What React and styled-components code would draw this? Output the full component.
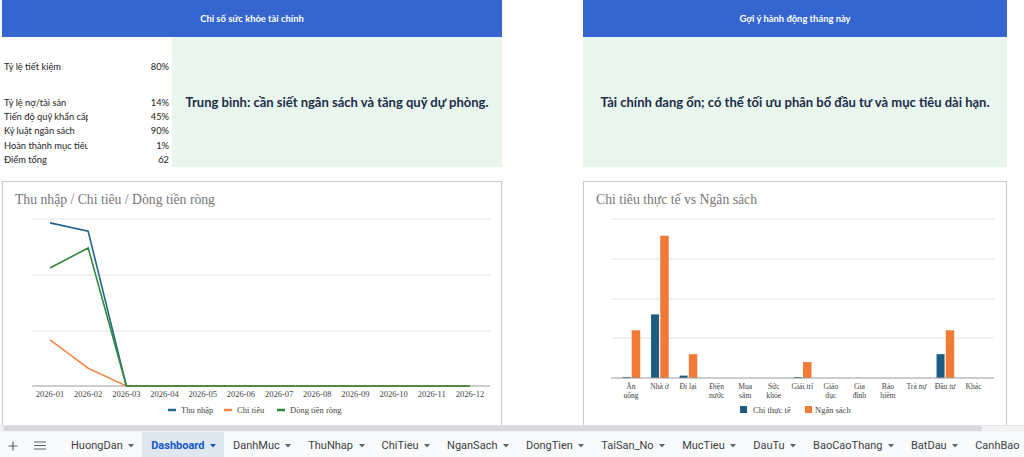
import React from 'react';
import styled, { createGlobalStyle } from 'styled-components';

const GlobalStyle = createGlobalStyle`
  * { box-sizing: border-box; }
  html, body { margin: 0; padding: 0; background: #fff; }
  body { font-family: 'Lato', 'Liberation Sans', sans-serif; }
`;

const Page = styled.div`
  width: 1024px;
  height: 457px;
  display: flex;
  flex-direction: column;
  overflow: hidden;
  background: #fff;
`;

const Sheet = styled.div`
  flex: 0 0 425px;
  overflow: hidden;
  display: grid;
  grid-template-columns: 500px 424px;
  grid-template-rows: 167px 260px;
  column-gap: 81px;
  row-gap: 14px;
  padding-left: 2px;
  align-content: start;
`;

const Panel = styled.section`
  display: flex;
  flex-direction: column;
  min-width: 0;
`;

const PanelHeader = styled.div`
  height: 37px;
  background: #3566d0;
  color: #fff;
  font-family: 'Lato', sans-serif;
  font-size: 9.4px;
  font-weight: 700;
  display: flex;
  align-items: center;
  justify-content: center;
`;

const PanelBody = styled.div`
  flex: 1;
  display: grid;
  grid-template-columns: ${(p) => (p.$withMetrics ? '168px 1fr' : '1fr')};
  column-gap: 2px;
`;

const MetricList = styled.div`
  display: grid;
  grid-template-rows: 58px repeat(5, 14.4px);
`;

const MetricRow = styled.div`
  display: grid;
  grid-template-columns: 86px 1fr;
  align-items: center;
  font-family: 'Lato', sans-serif;
  font-size: 9.3px;
  color: #222;
`;

const MetricLabel = styled.span`
  padding-left: 2px;
  white-space: nowrap;
  overflow: hidden;
`;

const MetricValue = styled.span`
  text-align: right;
  padding-right: 1px;
`;

const Advice = styled.div`
  background: #e8f6ed;
  display: flex;
  align-items: center;
  justify-content: center;
  font-family: 'Lato', sans-serif;
  font-weight: 700;
  font-size: 13px;
  color: #1d2c48;
  text-align: center;
`;

const ChartCard = styled.div`
  border: 1px solid #cbcbcb;
  background: #fff;
  display: flex;
  flex-direction: column;
  min-width: 0;
  overflow: hidden;
`;

const ChartTitle = styled.div`
  font-family: 'Liberation Serif', serif;
  font-size: 13.7px;
  line-height: 20px;
  color: #767676;
  padding: 8px 0 0 12px;
  height: 28px;
`;

const ScrollTrack = styled.div`
  flex: 0 0 7px;
  background: #f1f3f4;
  border-top: 1px solid #e3e3e3;
  padding: 0 0 0 3px;
`;

const ScrollThumb = styled.div`
  width: 979px;
  height: 5px;
  background: #d6d8db;
  border-radius: 3px;
`;

const TabBar = styled.nav`
  flex: 1;
  background: #f9fafb;
  display: flex;
  align-items: stretch;
  white-space: nowrap;
  font-family: 'Roboto', 'Liberation Sans', sans-serif;
  font-size: 11px;
  color: #3c4043;
`;

const TabTools = styled.div`
  display: flex;
  align-items: center;
  gap: 16px;
  padding: 2px 0 0 8px;
  flex: 0 0 62px;
`;

const Tab = styled.div`
  display: flex;
  align-items: center;
  gap: 5.5px;
  padding: 2px 8px 0 9px;
  background: ${(p) => (p.$active ? '#dfe7f1' : 'transparent')};
  color: ${(p) => (p.$active ? '#1257c7' : '#3c4043')};
  font-weight: ${(p) => (p.$active ? 700 : 400)};
  flex: 0 0 auto;
`;

const Caret = ({ color }) => (
  <svg width="6" height="4" viewBox="0 0 6 4">
    <polygon points="0,0 6,0 3,3.5" fill={color} />
  </svg>
);

const metrics = [
  ['Tỷ lệ tiết kiệm', '80%'],
  ['Tỷ lệ nợ/tài sản', '14%'],
  ['Tiến độ quỹ khẩn cấp', '45%'],
  ['Kỷ luật ngân sách', '90%'],
  ['Hoàn thành mục tiêu', '1%'],
  ['Điểm tổng', '62'],
];

const months = Array.from({ length: 12 }, (_, i) => `2026-${String(i + 1).padStart(2, '0')}`);

const lineSeries = [
  { name: 'Thu nhập', color: '#22668f', values: [29.3, 27.8, 0, 0, 0, 0, 0, 0, 0, 0, 0, 0], legendX: 168 },
  { name: 'Chi tiêu', color: '#f08a4c', values: [8.3, 3.2, 0, 0, 0, 0, 0, 0, 0, 0, 0, 0], legendX: 224 },
  { name: 'Dòng tiền ròng', color: '#2f8a3a', values: [21.2, 24.8, 0, 0, 0, 0, 0, 0, 0, 0, 0, 0], legendX: 277 },
];

const categories = [
  { label: ['Ăn', 'uống'], actual: 0.12, budget: 6 },
  { label: ['Nhà ở'], actual: 8, budget: 17.9 },
  { label: ['Đi lại'], actual: 0.3, budget: 3 },
  { label: ['Điện', 'nước'], actual: 0, budget: 0 },
  { label: ['Mua', 'sắm'], actual: 0, budget: 0 },
  { label: ['Sức', 'khỏe'], actual: 0, budget: 0 },
  { label: ['Giải trí'], actual: 0.12, budget: 2 },
  { label: ['Giáo', 'dục'], actual: 0, budget: 0 },
  { label: ['Gia', 'đình'], actual: 0, budget: 0 },
  { label: ['Bảo', 'hiểm'], actual: 0, budget: 0 },
  { label: ['Trả nợ'], actual: 0, budget: 0 },
  { label: ['Đầu tư'], actual: 3, budget: 6 },
  { label: ['Khác'], actual: 0, budget: 0 },
];

const tabs = ['HuongDan', 'Dashboard', 'DanhMuc', 'ThuNhap', 'ChiTieu', 'NganSach', 'DongTien', 'TaiSan_No', 'MucTieu', 'DauTu', 'BaoCaoThang', 'BatDau', 'CanhBao'];

// line chart drawn in page coordinates via viewBox offset
const IncomeChart = () => {
  const base = 386;
  const perUnit = 55.67 / 10;
  const x = (i) => 50 + i * 38.18;
  return (
    <svg width="498" height="230" viewBox="3 210 498 230">
      {[219, 275, 331].map((y) => (
        <line key={y} x1="32" x2="490" y1={y} y2={y} stroke="#e3e3e3" strokeWidth="1" />
      ))}
      <line x1="32" x2="490" y1={base} y2={base} stroke="#9a9a9a" strokeWidth="1" />
      {lineSeries.map((s) => (
        <polyline
          key={s.name}
          fill="none"
          stroke={s.color}
          strokeWidth="1.6"
          points={s.values.map((v, i) => `${x(i)},${base - v * perUnit}`).join(' ')}
        />
      ))}
      {months.map((m, i) => (
        <text key={m} x={x(i)} y="397" textAnchor="middle" fontFamily="Liberation Serif, serif" fontSize="8.5" fill="#444">
          {m}
        </text>
      ))}
      {lineSeries.map((s) => (
        <g key={s.name}>
          <line x1={s.legendX} x2={s.legendX + 8} y1="410" y2="410" stroke={s.color} strokeWidth="2.5" />
          <text x={s.legendX + 13} y="413" fontFamily="Liberation Serif, serif" fontSize="8.5" fill="#444">
            {s.name}
          </text>
        </g>
      ))}
    </svg>
  );
};

const BudgetChart = () => {
  const base = 378;
  const perUnit = 39.75 / 5;
  const cx = (i) => 632 + i * 28.55;
  return (
    <svg width="422" height="230" viewBox="585 210 422 230">
      {[219, 259, 299, 338].map((y) => (
        <line key={y} x1="612" x2="995" y1={y} y2={y} stroke="#e3e3e3" strokeWidth="1" />
      ))}
      {categories.map((c, i) => (
        <g key={c.label.join(' ')}>
          {c.actual > 0 && (
            <rect x={cx(i) - 8.5} y={base - c.actual * perUnit} width="8" height={c.actual * perUnit} fill="#1d5b80" />
          )}
          {c.budget > 0 && (
            <rect x={cx(i) + 0.7} y={base - c.budget * perUnit} width="8.5" height={c.budget * perUnit} fill="#ef7b37" />
          )}
          <text x={cx(i)} y="389" textAnchor="middle" fontFamily="Liberation Serif, serif" fontSize="7.6" fill="#444">
            {c.label.map((l, j) => (
              <tspan key={l} x={cx(i)} dy={j === 0 ? 0 : 8.5}>
                {l}
              </tspan>
            ))}
          </text>
        </g>
      ))}
      <line x1="612" x2="995" y1={base} y2={base} stroke="#9a9a9a" strokeWidth="1" />
      <rect x="741" y="406" width="7" height="7" fill="#1d5b80" />
      <text x="754" y="413" fontFamily="Liberation Serif, serif" fontSize="8.5" fill="#444">Chi thực tế</text>
      <rect x="806" y="406" width="7" height="7" fill="#ef7b37" />
      <text x="816" y="413" fontFamily="Liberation Serif, serif" fontSize="8.5" fill="#444">Ngân sách</text>
    </svg>
  );
};

export default function App() {
  return (
    <Page>
      <GlobalStyle />
      <Sheet>
        <Panel>
          <PanelHeader>Chỉ số sức khỏe tài chính</PanelHeader>
          <PanelBody $withMetrics>
            <MetricList>
              {metrics.map(([label, value]) => (
                <MetricRow key={label}>
                  <MetricLabel>{label}</MetricLabel>
                  <MetricValue>{value}</MetricValue>
                </MetricRow>
              ))}
            </MetricList>
            <Advice>Trung bình: cần siết ngân sách và tăng quỹ dự phòng.</Advice>
          </PanelBody>
        </Panel>
        <Panel>
          <PanelHeader>Gợi ý hành động tháng này</PanelHeader>
          <PanelBody>
            <Advice>Tài chính đang ổn; có thể tối ưu phân bổ đầu tư và mục tiêu dài hạn.</Advice>
          </PanelBody>
        </Panel>
        <ChartCard>
          <ChartTitle>Thu nhập / Chi tiêu / Dòng tiền ròng</ChartTitle>
          <IncomeChart />
        </ChartCard>
        <ChartCard>
          <ChartTitle>Chi tiêu thực tế vs Ngân sách</ChartTitle>
          <BudgetChart />
        </ChartCard>
      </Sheet>
      <ScrollTrack>
        <ScrollThumb />
      </ScrollTrack>
      <TabBar>
        <TabTools>
          <svg width="10" height="10" viewBox="0 0 10 10">
            <path d="M5 0.5v9M0.5 5h9" stroke="#5f6368" strokeWidth="1.2" />
          </svg>
          <svg width="12" height="9" viewBox="0 0 12 9">
            <path d="M0 1h12M0 4.5h12M0 8h12" stroke="#5f6368" strokeWidth="1.2" />
          </svg>
        </TabTools>
        {tabs.map((t) => (
          <Tab key={t} $active={t === 'Dashboard'}>
            {t}
            <Caret color={t === 'Dashboard' ? '#1257c7' : '#5f6368'} />
          </Tab>
        ))}
      </TabBar>
    </Page>
  );
}
